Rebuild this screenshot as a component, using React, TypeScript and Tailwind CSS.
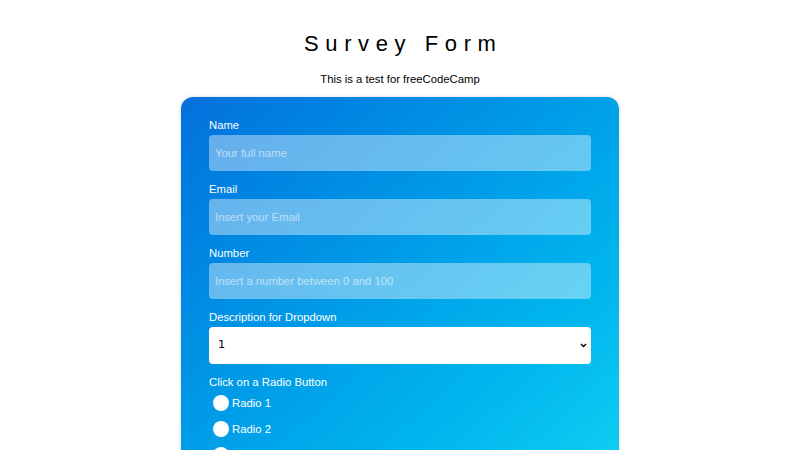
import React from 'react';

const App: React.FC = () => {
  const fields = [
    { label: 'Name', placeholder: 'Your full name', type: 'text' },
    { label: 'Email', placeholder: 'Insert your Email', type: 'email' },
    { label: 'Number', placeholder: 'Insert a number between 0 and 100', type: 'number' }
  ];

  return (
    <div className="min-h-screen bg-white font-['Liberation_Sans',Arial,sans-serif]">
      {/* Header */}
      <header className="pt-[29px] text-center">
        <h1 className="text-[22px] leading-[30px] tracking-[0.3em] text-black pl-[0.3em]">Survey Form</h1>
        <p className="mt-[12px] text-[11.3px] leading-[16px] text-black">This is a test for freeCodeCamp</p>
      </header>

      {/* Form card */}
      <form className="mx-auto mt-[10px] w-[438px] rounded-[12px] bg-gradient-to-br from-[#0670dc] to-[#13d0f3] px-[28px] pt-[20px] pb-6 shadow-[0_0_4px_rgba(0,0,0,0.15)]">
        {fields.map((f) => (
          <div key={f.label} className="mb-[10px]">
            <label className="block text-[11.3px] leading-[16px] text-white mb-[2px]">{f.label}</label>
            <input
              type={f.type}
              placeholder={f.placeholder}
              className="block w-full h-[36px] rounded-[4px] bg-white/40 px-[6px] text-[11.3px] text-white placeholder:text-white/55 outline-none"
            />
          </div>
        ))}

        <div className="mb-[10px]">
          <label className="block text-[11.3px] leading-[16px] text-white mb-[2px]">Description for Dropdown</label>
          <div className="relative">
            <select className="block w-full h-[37px] appearance-none rounded-[4px] bg-white px-[9px] text-[11.3px] text-black font-['DejaVu_Sans',sans-serif]">
              <option>1</option>
              <option>2</option>
              <option>3</option>
            </select>
            <svg className="pointer-events-none absolute right-[4px] top-[16px]" width="7" height="5" viewBox="0 0 7 5">
              <path d="M1 1l2.5 2.5L6 1" fill="none" stroke="#000" strokeWidth="1.4" />
            </svg>
          </div>
        </div>

        <div>
          <p className="text-[11.3px] leading-[16px] text-white">Click on a Radio Button</p>
          <div className="mt-[5px] flex flex-col gap-[10px] pl-[4px]">
            {['Radio 1', 'Radio 2', 'Radio 3'].map((r) => (
              <label key={r} className="flex items-center gap-[3px] text-[11.3px] leading-[16px] text-white">
                <span className="inline-block w-[16px] h-[16px] rounded-full bg-white" />
                {r}
              </label>
            ))}
          </div>
        </div>
      </form>
    </div>
  );
};

export default App;
